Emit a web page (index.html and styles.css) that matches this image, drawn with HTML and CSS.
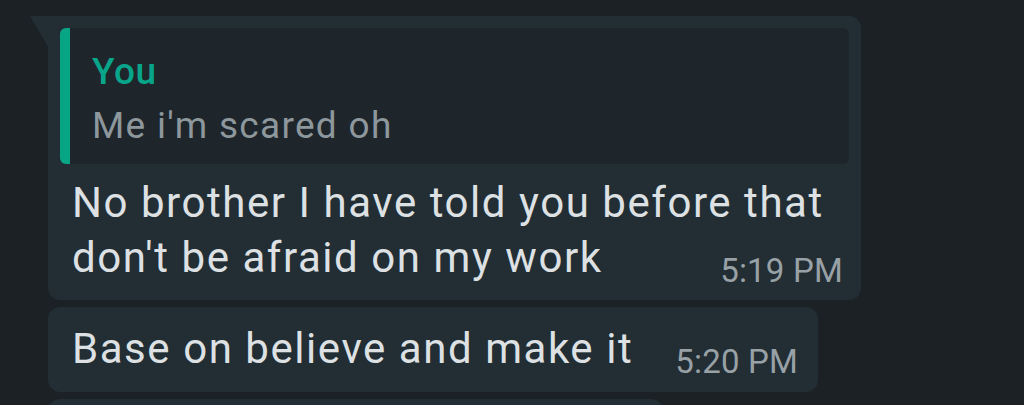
FILE: index.html
```html
<!doctype html>
<html>
<head>
  <link rel="stylesheet" href="styles.css">
</head>
<body>
  <div class="chat">
    <div class="bubble first">
      <div class="quote">
        <div class="quote-name">You</div>
        <div class="quote-text">Me i'm scared oh</div>
      </div>
      <p class="msg">No brother I have told you before that don't be afraid on my work<span class="time">5:19 PM</span></p>
    </div>

    <div class="bubble">
      <p class="msg">Base on believe and make it<span class="time">5:20 PM</span></p>
    </div>

    <div class="bubble next"></div>
  </div>
</body>
</html>
```

FILE: styles.css
```css
* {
  margin: 0;
  padding: 0;
  box-sizing: border-box;
}

body {
  background: #1b2124;
  font-family: Roboto, "Noto Sans", sans-serif;
  overflow: hidden;
}

.chat {
  display: flex;
  flex-direction: column;
  align-items: flex-start;
  gap: 7px;
  padding: 16px 0 0 48px;
}

.bubble {
  position: relative;
  max-width: 813px;
  background: #222d34;
  border-radius: 12px;
  padding: 14px 20px 16px 24px;
}

.bubble.first {
  width: 813px;
  border-top-left-radius: 0;
  padding: 12px 12px 15px 12px;
}

/* little tail on the first bubble of a group */
.bubble.first::before {
  content: '';
  position: absolute;
  left: -18px;
  top: 0;
  width: 18px;
  height: 31px;
  background: #222d34;
  clip-path: polygon(0 0, 100% 0, 100% 100%);
}

.bubble.next {
  width: 615px;
  height: 80px;
}

.quote {
  background: #1e262c;
  border-left: 10px solid #06a685;
  border-radius: 6px;
  padding: 17px 20px 11px 22px;
  font-size: 37px;
  line-height: 54px;
  letter-spacing: 1.3px;
}

.quote-name {
  color: #09a58a;
  font-weight: 500;
  letter-spacing: 0.6px;
}

.quote-text {
  color: #8d979c;
}

.bubble.first .msg {
  margin: 11px 6px 0 12px;
}

.msg {
  display: flow-root;
  color: #dde1e3;
  font-size: 42px;
  line-height: 55px;
  letter-spacing: 1.55px;
}

.time {
  float: right;
  margin: 21px 0 -6px 42px;
  font-size: 33px;
  line-height: 40px;
  letter-spacing: 0.2px;
  color: #98a1a6;
}
```
